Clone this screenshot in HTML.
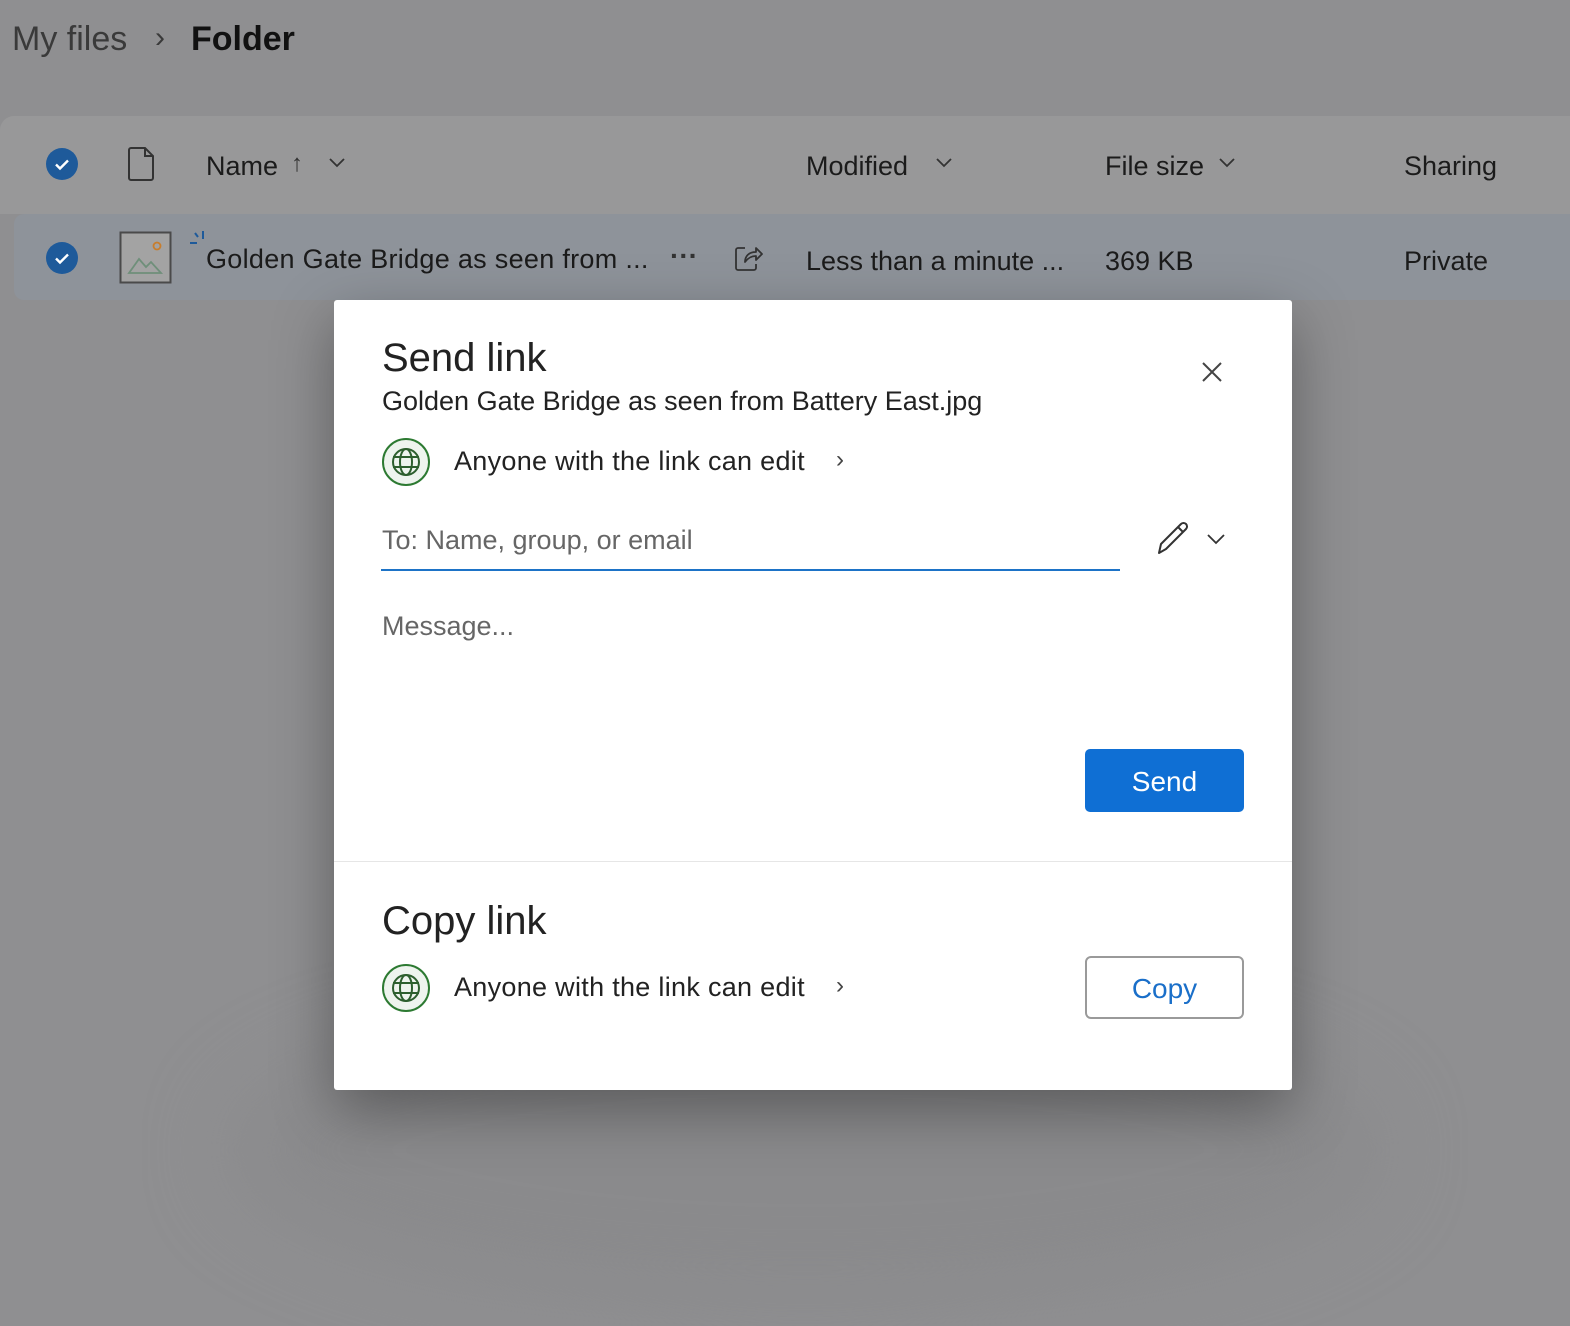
<!DOCTYPE html>
<html><head><style>
*{margin:0;padding:0;box-sizing:border-box}
body{width:1570px;height:1326px;background:#8f8f91;font-family:"Liberation Sans",sans-serif;position:relative;overflow:hidden;color:#1b1b1b}
.a{position:absolute;white-space:nowrap}
.chk{position:absolute;width:32px;height:32px;border-radius:50%;background:#1e5a9a}
.chk svg{position:absolute;left:0;top:0}
</style></head><body>
<div class="a" style="left:12px;top:20px;font-size:34px;color:#3a3a3a">My files</div>
<div class="a" style="left:155px;top:21px;font-size:30px;color:#3a3a3a">&#8250;</div>
<div class="a" style="left:191px;top:20px;font-size:34px;font-weight:bold;color:#111">Folder</div>

<div class="a" style="left:0;top:116px;width:1570px;height:98px;background:#989899;border-radius:14px 0 0 0"></div>
<div class="a" style="left:14px;top:214px;width:1556px;height:86px;background:#8e939a;border-radius:10px 0 0 10px"></div>

<div class="chk" style="left:46px;top:148px"><svg width="32" height="32"><path d="M10 16.5l4 4 8-8" stroke="#fff" stroke-width="2.4" fill="none"/></svg></div>
<svg class="a" style="left:128px;top:146px" width="28" height="36"><path d="M3 2h14l8 8v22a2 2 0 0 1-2 2H3a2 2 0 0 1-2-2V4a2 2 0 0 1 2-2zM17 2v8h8" stroke="#333" stroke-width="2" fill="none"/></svg>
<div class="a" style="left:206px;top:151px;font-size:27px;color:#1b1b1b">Name</div>
<div class="a" style="left:291px;top:150px;font-size:24px;color:#333">&#8593;</div>
<svg class="a" style="left:328px;top:156px" width="18" height="12"><path d="M2 3l7 7 7-7" stroke="#333" stroke-width="1.8" fill="none"/></svg>
<div class="a" style="left:806px;top:151px;font-size:27px">Modified</div>
<svg class="a" style="left:935px;top:156px" width="18" height="12"><path d="M2 3l7 7 7-7" stroke="#333" stroke-width="1.8" fill="none"/></svg>
<div class="a" style="left:1105px;top:151px;font-size:27px">File size</div>
<svg class="a" style="left:1218px;top:156px" width="18" height="12"><path d="M2 3l7 7 7-7" stroke="#333" stroke-width="1.8" fill="none"/></svg>
<div class="a" style="left:1404px;top:151px;font-size:27px">Sharing</div>

<div class="chk" style="left:46px;top:242px"><svg width="32" height="32"><path d="M10 16.5l4 4 8-8" stroke="#fff" stroke-width="2.4" fill="none"/></svg></div>
<svg class="a" style="left:119px;top:231px" width="54" height="54"><rect x="1.5" y="1.5" width="50" height="50" fill="#a3a3a3" stroke="#4a4a4a" stroke-width="2"/><circle cx="38" cy="15" r="3.5" fill="none" stroke="#c87d2c" stroke-width="1.8"/><path d="M10 42l10-14 7 8 5-5 10 11z" fill="none" stroke="#6f8f7a" stroke-width="1.8"/></svg>
<svg class="a" style="left:188px;top:229px" width="20" height="20"><path d="M2 14h7M10 8l-3-4M15 2v8" stroke="#1e5a9a" stroke-width="2"/></svg>
<div class="a" style="left:206px;top:244px;font-size:27px;letter-spacing:0.3px">Golden Gate Bridge as seen from ...</div>
<div class="a" style="left:670px;top:240px;font-size:28px;color:#333;font-weight:bold">&middot;&middot;&middot;</div>
<svg class="a" style="left:733px;top:243px" width="32" height="30"><path d="M12 5H5a2 2 0 0 0-2 2v18a2 2 0 0 0 2 2h16a2 2 0 0 0 2-2v-4M12 19c0-6 4-10 11-10V5l6 6-6 6v-4c-5 0-8 2-11 6z" stroke="#333" stroke-width="1.8" fill="none" stroke-linejoin="round"/></svg>
<div class="a" style="left:806px;top:246px;font-size:27px">Less than a minute ...</div>
<div class="a" style="left:1105px;top:246px;font-size:27px">369 KB</div>
<div class="a" style="left:1404px;top:246px;font-size:27px">Private</div>

<div class="a" style="left:230px;top:1000px;width:1150px;height:300px;border-radius:50%;background:#8a8a8c;filter:blur(40px)"></div>
<div class="a" style="left:334px;top:300px;width:958px;height:790px;background:#fff;border-radius:3px;box-shadow:0 20px 60px rgba(0,0,0,0.35)">
 <div class="a" style="left:48px;top:36px;font-size:40px;color:#222">Send link</div>
 <div class="a" style="left:48px;top:86px;font-size:27px;color:#222">Golden Gate Bridge as seen from Battery East.jpg</div>
 <svg class="a" style="left:866px;top:60px" width="24" height="24"><path d="M3 3l18 18M21 3L3 21" stroke="#444" stroke-width="2"/></svg>
 <svg class="a" style="left:47px;top:137px" width="50" height="50"><circle cx="25" cy="25" r="23" fill="#eef4ee" stroke="#2d7a32" stroke-width="2"/><circle cx="25" cy="25" r="13" fill="none" stroke="#2d5f2e" stroke-width="2"/><ellipse cx="25" cy="25" rx="6" ry="13" fill="none" stroke="#2d5f2e" stroke-width="2"/><path d="M12 20h26M12 30h26" stroke="#2d5f2e" stroke-width="2"/></svg>
 <div class="a" style="left:120px;top:146px;font-size:27px;color:#222;letter-spacing:0.3px">Anyone with the link can edit</div>
 <div class="a" style="left:502px;top:146px;font-size:24px;color:#444">&#8250;</div>
 <div class="a" style="left:48px;top:225px;font-size:27px;color:#666">To: Name, group, or email</div>
 <div class="a" style="left:47px;top:269px;width:739px;height:2px;background:#1d73c7"></div>
 <svg class="a" style="left:820px;top:220px" width="36" height="36"><path d="M5 33l2-9L27 4a3 3 0 0 1 5 5L12 29z M24 7l5 5" stroke="#333" stroke-width="2" fill="none" stroke-linejoin="round"/></svg>
 <svg class="a" style="left:872px;top:232px" width="20" height="14"><path d="M2 3l8 8 8-8" stroke="#333" stroke-width="1.8" fill="none"/></svg>
 <div class="a" style="left:48px;top:311px;font-size:27px;color:#666">Message...</div>
 <div class="a" style="left:751px;top:449px;width:159px;height:63px;background:#0f6fd4;border-radius:5px;color:#fff;font-size:28px;text-align:center;line-height:65px">Send</div>
 <div class="a" style="left:0;top:561px;width:958px;height:1px;background:#e6e6e6"></div>
 <div class="a" style="left:48px;top:599px;font-size:40px;color:#222">Copy link</div>
 <svg class="a" style="left:47px;top:663px" width="50" height="50"><circle cx="25" cy="25" r="23" fill="#eef4ee" stroke="#2d7a32" stroke-width="2"/><circle cx="25" cy="25" r="13" fill="none" stroke="#2d5f2e" stroke-width="2"/><ellipse cx="25" cy="25" rx="6" ry="13" fill="none" stroke="#2d5f2e" stroke-width="2"/><path d="M12 20h26M12 30h26" stroke="#2d5f2e" stroke-width="2"/></svg>
 <div class="a" style="left:120px;top:672px;font-size:27px;color:#222;letter-spacing:0.3px">Anyone with the link can edit</div>
 <div class="a" style="left:502px;top:672px;font-size:24px;color:#444">&#8250;</div>
 <div class="a" style="left:751px;top:656px;width:159px;height:63px;border:2px solid #9a9a9a;border-radius:6px;color:#1a6fc9;font-size:28px;text-align:center;line-height:62px">Copy</div>
</div>
</body></html>
